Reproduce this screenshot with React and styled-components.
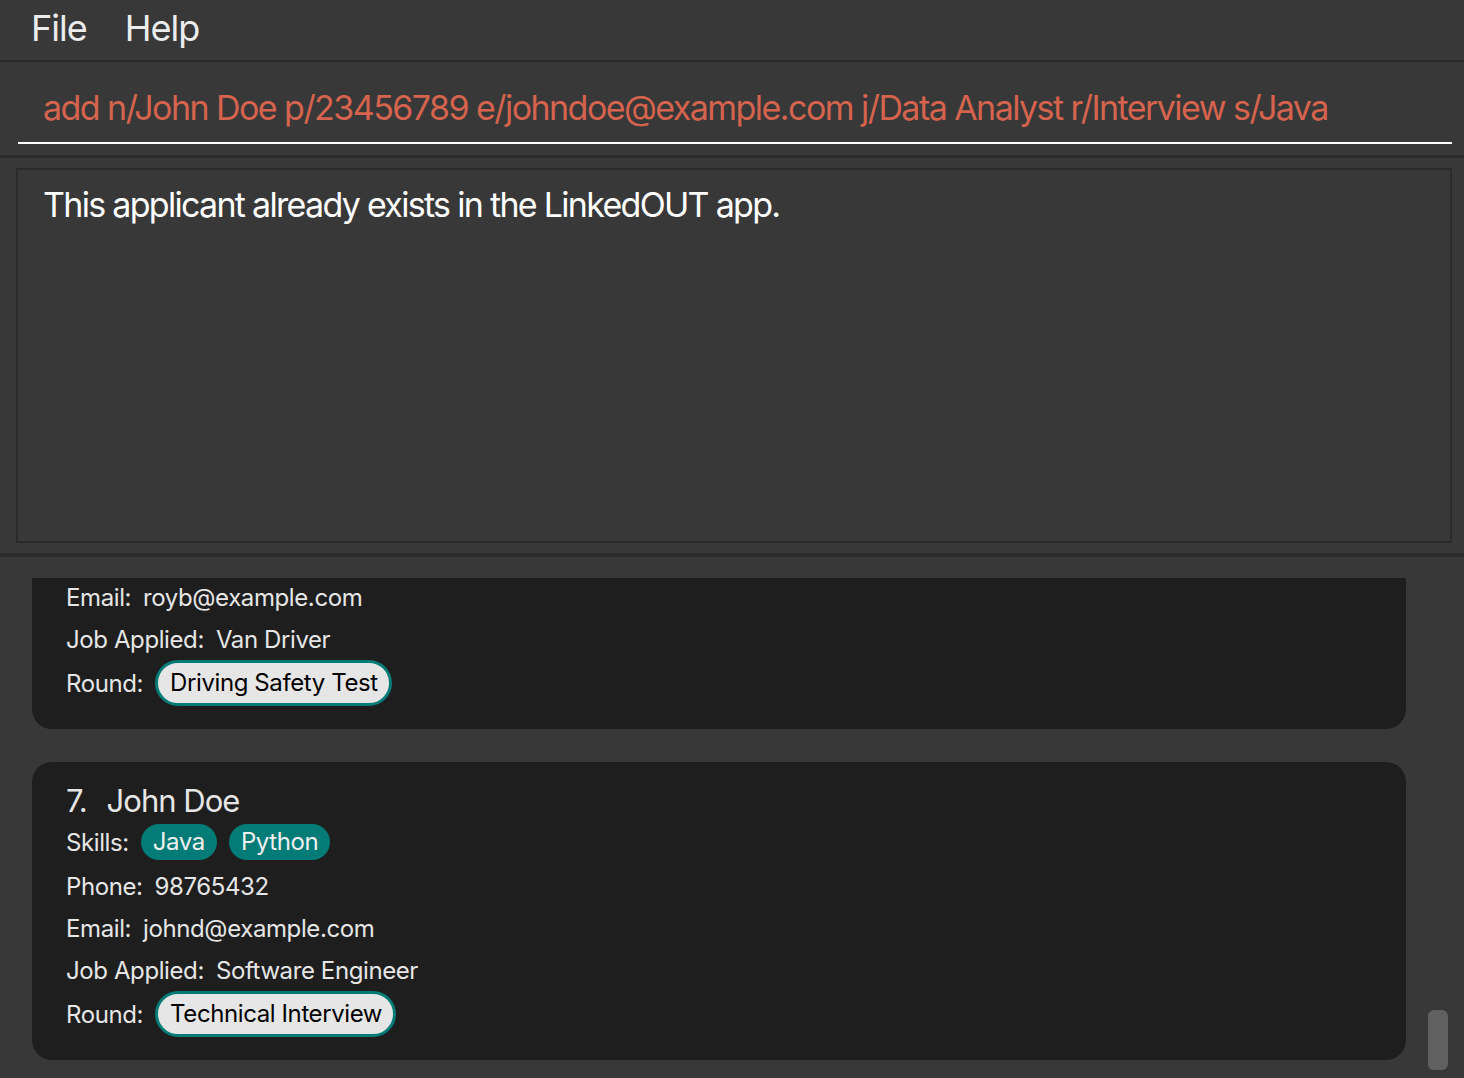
import React from 'react';
import styled, { createGlobalStyle } from 'styled-components';

const GlobalStyle = createGlobalStyle`
  html, body {
    margin: 0;
    padding: 0;
    background: #383838;
    font-family: 'Inter', 'Roboto', sans-serif;
    overflow: hidden;
  }
`;

const applicants = [
  {
    id: 6,
    cut: true,
    email: 'royb@example.com',
    job: 'Van Driver',
    round: 'Driving Safety Test',
  },
  {
    id: 7,
    name: 'John Doe',
    skills: ['Java', 'Python'],
    phone: '98765432',
    email: 'johnd@example.com',
    job: 'Software Engineer',
    round: 'Technical Interview',
  },
];

export default function App() {
  return (
    <>
      <GlobalStyle />
      <Window>
        <MenuBar>
          <MenuItem>File</MenuItem>
          <MenuItem>Help</MenuItem>
        </MenuBar>
        <CommandSection>
          <CommandInput>
            add n/John Doe p/23456789 e/johndoe@example.com j/Data Analyst r/Interview s/Java
          </CommandInput>
        </CommandSection>
        <ResultSection>
          <ResultBox>This applicant already exists in the LinkedOUT app.</ResultBox>
        </ResultSection>
        <ListSection>
          <Viewport>
            <CardList>
              {applicants.map((a) => (
                <Card key={a.id} $cut={a.cut}>
                  {a.name && (
                    <NameRow>
                      <span>{a.id}.</span>
                      <span>{a.name}</span>
                    </NameRow>
                  )}
                  {a.skills && (
                    <TagRow>
                      <Label>Skills:</Label>
                      {a.skills.map((s) => (
                        <SkillTag key={s}>{s}</SkillTag>
                      ))}
                    </TagRow>
                  )}
                  {a.phone && (
                    <Row>
                      <Label>Phone:</Label>
                      <Value>{a.phone}</Value>
                    </Row>
                  )}
                  <Row>
                    <Label>Email:</Label>
                    <Value>{a.email}</Value>
                  </Row>
                  <Row>
                    <Label>Job Applied:</Label>
                    <Value>{a.job}</Value>
                  </Row>
                  <TagRow>
                    <Label>Round:</Label>
                    <RoundTag>{a.round}</RoundTag>
                  </TagRow>
                </Card>
              ))}
            </CardList>
          </Viewport>
          <ScrollTrack>
            <ScrollThumb />
          </ScrollTrack>
        </ListSection>
      </Window>
    </>
  );
}

const Window = styled.div`
  width: 1464px;
  height: 1078px;
  display: flex;
  flex-direction: column;
  background: #383838;
  overflow: hidden;
`;

const MenuBar = styled.div`
  height: 60px;
  display: flex;
  align-items: center;
  gap: 38px;
  padding-left: 31px;
  border-bottom: 2px solid #2b2b2b;
  flex-shrink: 0;
`;

const MenuItem = styled.span`
  font-size: 36px;
  color: #ececec;
  letter-spacing: -1px;
  padding-bottom: 5px;
`;

const CommandSection = styled.div`
  height: 93px;
  padding: 0 12px 0 18px;
  display: flex;
  align-items: flex-end;
  border-bottom: 3px solid #2b2b2b;
  flex-shrink: 0;
`;

const CommandInput = styled.div`
  flex: 1;
  height: 54px;
  margin-bottom: 11px;
  padding-left: 25px;
  border-bottom: 2px solid #ffffff;
  font-size: 34px;
  line-height: 40px;
  color: #d5634e;
  letter-spacing: -1.55px;
  white-space: nowrap;
`;

const ResultSection = styled.div`
  height: 399px;
  padding: 10px 12px 10px 16px;
  box-sizing: border-box;
  border-bottom: 4px solid #2b2b2b;
  flex-shrink: 0;
`;

const ResultBox = styled.div`
  height: 100%;
  box-sizing: border-box;
  border: 2px solid #2b2b2b;
  padding: 14px 25px;
  font-size: 34px;
  color: #ffffff;
  letter-spacing: -1.7px;
`;

const ListSection = styled.div`
  flex: 1;
  display: flex;
  padding: 21px 0 0 32px;
  min-height: 0;
`;

const Viewport = styled.div`
  width: 1374px;
  overflow: hidden;
`;

const CardList = styled.div`
  margin-top: -2px;
  display: flex;
  flex-direction: column;
  gap: 33px;
`;

const Card = styled.div`
  background: #1e1e1e;
  border-radius: ${(p) => (p.$cut ? '0 0 20px 20px' : '20px')};
  padding: ${(p) => (p.$cut ? '0' : '19px')} 34px 23px;
  display: flex;
  flex-direction: column;
  color: #e6e6e6;
`;

const NameRow = styled.div`
  display: flex;
  gap: 20px;
  font-size: 31px;
  height: 38px;
  align-items: center;
  letter-spacing: -1px;
  color: #e6e6e6;
`;

const Row = styled.div`
  height: 42px;
  display: flex;
  align-items: center;
  gap: 12px;
  font-size: 24px;
  letter-spacing: -0.4px;
`;

const TagRow = styled(Row)`
  height: 46px;
`;

const Label = styled.span`
  color: #e6e6e6;
`;

const Value = styled.span`
  color: #e6e6e6;
`;

const SkillTag = styled.span`
  background: #037b77;
  color: #f0f0f0;
  border-radius: 18px;
  padding: 0 12px;
  height: 36px;
  line-height: 36px;
`;

const RoundTag = styled.span`
  background: #e6e6e6;
  color: #000000;
  border: 3px solid #037b77;
  border-radius: 24px;
  padding: 0 11px 0 12px;
  height: 40px;
  line-height: 40px;
`;

const ScrollTrack = styled.div`
  flex: 1;
  display: flex;
  justify-content: center;
  align-items: flex-end;
  padding-bottom: 8px;
`;

const ScrollThumb = styled.div`
  width: 20px;
  height: 60px;
  border-radius: 6px;
  background: #606060;
  margin-left: 6px;
`;
